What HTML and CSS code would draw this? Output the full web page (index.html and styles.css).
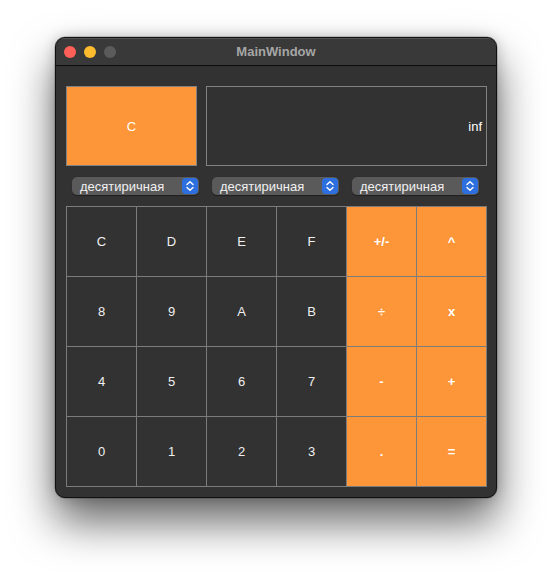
FILE: index.html
```html
<!DOCTYPE html>
<html>
<head>
<meta charset="utf-8">
<link rel="stylesheet" href="styles.css">
</head>
<body>
<div class="window">
  <div class="titlebar">
    <div class="lights">
      <span class="light red"></span>
      <span class="light yellow"></span>
      <span class="light gray"></span>
    </div>
    <div class="title">MainWindow</div>
  </div>
  <div class="content">
    <div class="top">
      <div class="clear">C</div>
      <div class="display">inf</div>
    </div>
    <div class="combos">
      <div class="slot"><div class="combo"><span>десятиричная</span><span class="step"><svg width="10" height="12" viewBox="0 0 10 12"><path d="M2 4.5 L5 1.8 L8 4.5 M2 7.5 L5 10.2 L8 7.5" fill="none" stroke="#fff" stroke-width="1.4" stroke-linecap="round" stroke-linejoin="round"/></svg></span></div></div>
      <div class="slot"><div class="combo"><span>десятиричная</span><span class="step"><svg width="10" height="12" viewBox="0 0 10 12"><path d="M2 4.5 L5 1.8 L8 4.5 M2 7.5 L5 10.2 L8 7.5" fill="none" stroke="#fff" stroke-width="1.4" stroke-linecap="round" stroke-linejoin="round"/></svg></span></div></div>
      <div class="slot"><div class="combo"><span>десятиричная</span><span class="step"><svg width="10" height="12" viewBox="0 0 10 12"><path d="M2 4.5 L5 1.8 L8 4.5 M2 7.5 L5 10.2 L8 7.5" fill="none" stroke="#fff" stroke-width="1.4" stroke-linecap="round" stroke-linejoin="round"/></svg></span></div></div>
    </div>
    <div class="keys">
      <div class="key">C</div><div class="key">D</div><div class="key">E</div><div class="key">F</div><div class="key op">+/-</div><div class="key op">^</div>
      <div class="key">8</div><div class="key">9</div><div class="key">A</div><div class="key">B</div><div class="key op">÷</div><div class="key op">x</div>
      <div class="key">4</div><div class="key">5</div><div class="key">6</div><div class="key">7</div><div class="key op">-</div><div class="key op">+</div>
      <div class="key">0</div><div class="key">1</div><div class="key">2</div><div class="key">3</div><div class="key op">.</div><div class="key op">=</div>
    </div>
  </div>
</div>
</body>
</html>
```

FILE: styles.css
```css
html, body {
  margin: 0;
  padding: 0;
  background: #ffffff;
}
body {
  box-sizing: border-box;
  min-height: 572px;
  padding: 37px 0 0 55px;
  font-family: "Liberation Sans", Arial, sans-serif;
}
.window {
  box-sizing: border-box;
  width: 442px;
  height: 461px;
  background: #323232;
  border: 1px solid #111;
  border-radius: 10px;
  box-shadow: 0 0 0 0.5px rgba(0,0,0,0.3), 0 24px 44px rgba(0,0,0,0.6), 0 0 14px rgba(0,0,0,0.2);
  overflow: hidden;
}
.titlebar {
  position: relative;
  height: 27px;
  background: #393939;
  border-bottom: 1px solid #0c0c0c;
  box-shadow: inset 0 1px 0 rgba(255,255,255,0.12);
  display: flex;
  align-items: center;
  justify-content: center;
}
.lights {
  position: absolute;
  left: 8px;
  top: 8px;
  display: flex;
  gap: 8px;
}
.light {
  width: 12px;
  height: 12px;
  border-radius: 50%;
  display: block;
}
.red { background: #fe5f57; }
.yellow { background: #febc2e; }
.gray { background: #5b5b5b; }
.title {
  color: #a6a6a6;
  font-weight: bold;
  font-size: 13px;
}
.content {
  padding: 20px 9px 0 10px;
}
.top {
  display: flex;
  gap: 9px;
  height: 80px;
}
.clear {
  box-sizing: border-box;
  width: 131px;
  height: 80px;
  background: #fd9638;
  border: 1px solid #828282;
  color: #fff;
  font-size: 13px;
  display: flex;
  align-items: center;
  justify-content: center;
}
.display {
  box-sizing: border-box;
  width: 281px;
  height: 80px;
  border: 1px solid #828282;
  color: #fff;
  font-size: 13px;
  display: flex;
  align-items: center;
  justify-content: flex-end;
  padding-right: 4px;
}
.combos {
  display: flex;
  margin-top: 11px;
  height: 18px;
}
.slot {
  width: 140px;
  padding-left: 6px;
  box-sizing: border-box;
}
.combo {
  box-sizing: border-box;
  width: 127px;
  height: 18px;
  background: #5a5a5a;
  border-radius: 5px;
  color: #f0f0f0;
  font-size: 13px;
  display: flex;
  align-items: center;
  justify-content: space-between;
  padding: 0 1px 0 8px;
  box-shadow: 0 0.5px 1px rgba(0,0,0,0.4);
}
.step {
  width: 16px;
  height: 16px;
  border-radius: 4px;
  background: #2d6fde;
  display: flex;
  align-items: center;
  justify-content: center;
}
.keys {
  margin-top: 11px;
  display: grid;
  grid-template-columns: repeat(6, 69px);
  grid-template-rows: repeat(4, 69px);
  gap: 1px;
  padding: 1px;
  background: #7c7c7c;
  width: max-content;
}
.key {
  background: #323232;
  color: #f0f0f0;
  font-size: 13px;
  display: flex;
  align-items: center;
  justify-content: center;
}
.key.op {
  background: #fd9638;
  color: #fff;
  font-weight: bold;
}
```
